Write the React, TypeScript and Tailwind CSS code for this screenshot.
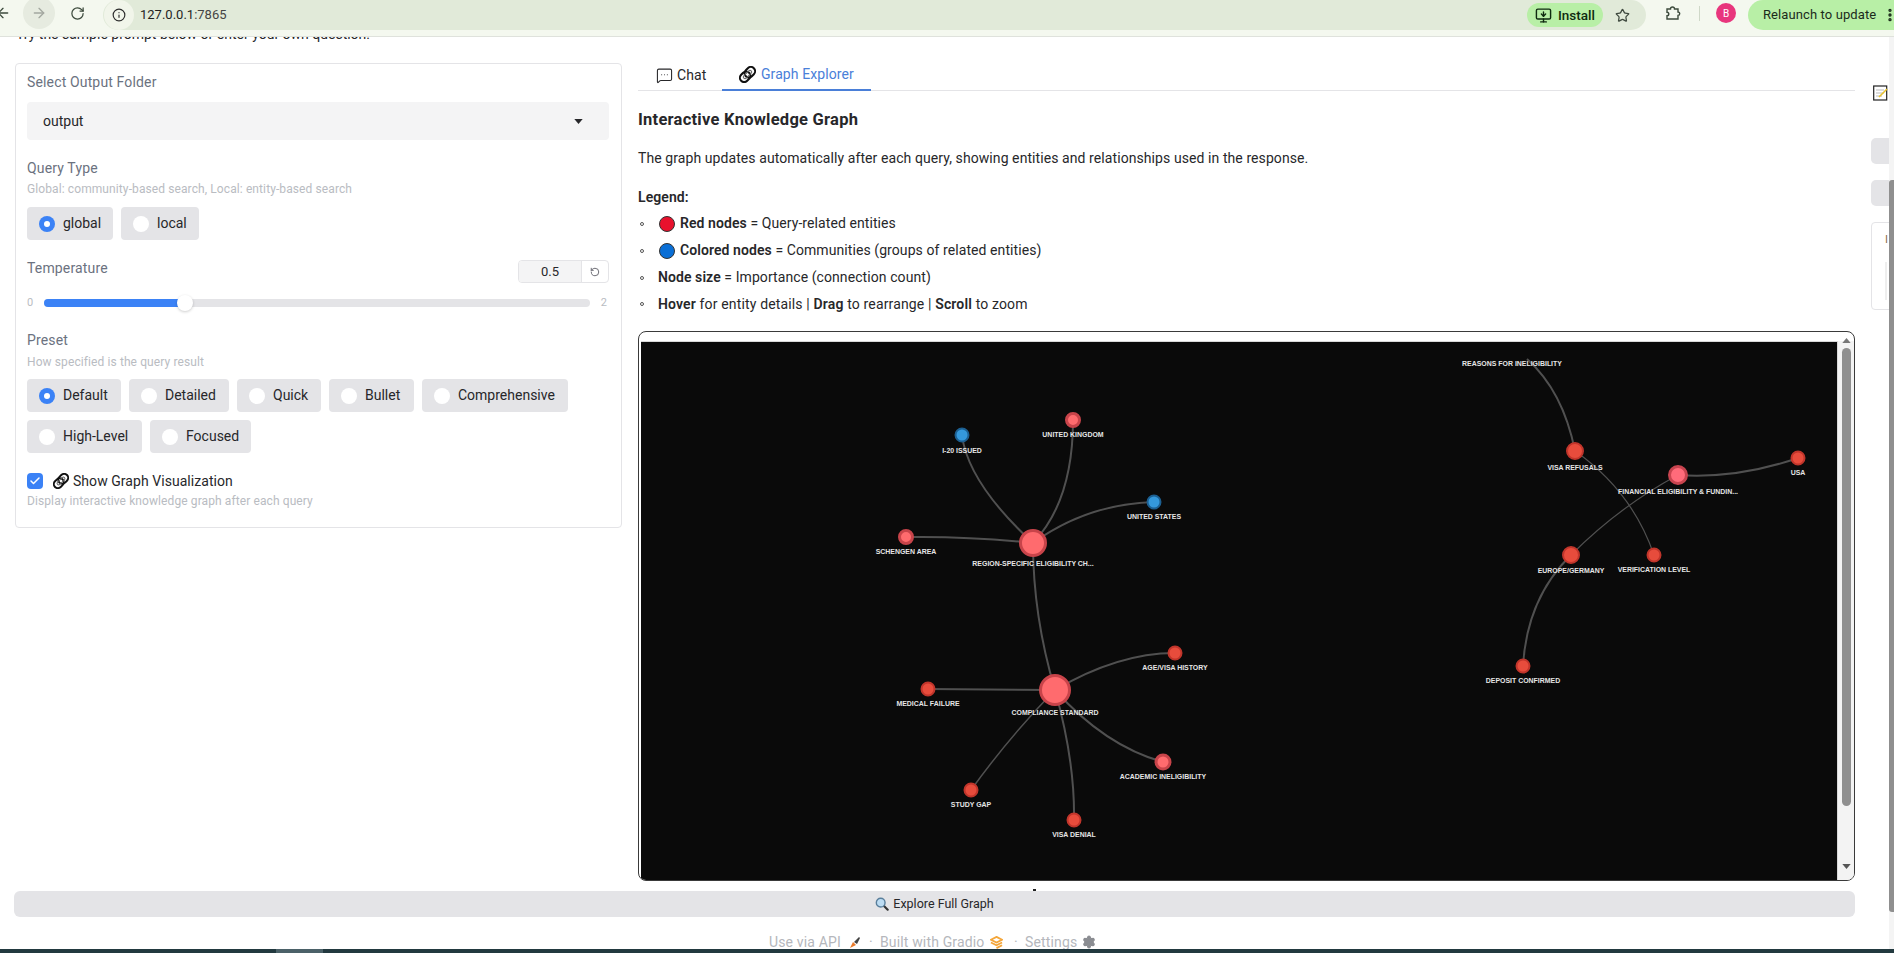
import React from "react";
import { ArrowLeft, ArrowRight, RotateCw, Info, Star, MonitorDown, MoreVertical, MessageSquareMore, RotateCcw, Check, Settings } from "lucide-react";

const LinkEmoji = ({ className }: { className: string }) => (
  <svg viewBox="0 0 18 18" className={className}>
    <g transform="rotate(-45 9 9)" fill="none" stroke="#111">
      <rect x="-0.5" y="4.5" width="12" height="9" rx="4.5" strokeWidth="2.2" />
      <rect x="6.5" y="4.5" width="12" height="9" rx="4.5" strokeWidth="2.2" />
      <rect x="3.5" y="7.2" width="11" height="3.6" rx="1.8" strokeWidth="1.1" stroke="#666" />
    </g>
  </svg>
);

const Radio = ({ label, w, on }: { label: string; w: string; on?: boolean }) => (
  <div className={`${w} h-[33px] flex items-center pl-[12px] gap-[8px] rounded-[4px] bg-[#e4e4e7] text-[14px] text-[#27272a]`}>
    {on ? (
      <span className="w-[16px] h-[16px] rounded-full bg-[#3b82f6] flex items-center justify-center shrink-0">
        <span className="w-[6px] h-[6px] rounded-full bg-white" />
      </span>
    ) : (
      <span className="w-[16px] h-[16px] rounded-full bg-white shrink-0" />
    )}
    <span>{label}</span>
  </div>
);

type N = { x: number; y: number; r: number; sw: number; fill: string; stroke: string; label: string; ly: number };
const RED = { fill: "#e74c3c", stroke: "#c0352b" };
const PINK = { fill: "#ff6b6e", stroke: "#c8444a" };
const BLUE = { fill: "#3498db", stroke: "#1c5f91" };
const nodes: N[] = [
  { x: 962, y: 434, r: 6.5, sw: 2, ...BLUE, label: "I-20 ISSUED", ly: 449 },
  { x: 1073, y: 419, r: 6.5, sw: 3, ...PINK, label: "UNITED KINGDOM", ly: 433 },
  { x: 1154, y: 501, r: 6.5, sw: 2, ...BLUE, label: "UNITED STATES", ly: 515 },
  { x: 906, y: 536, r: 6.5, sw: 3, ...PINK, label: "SCHENGEN AREA", ly: 550 },
  { x: 1033, y: 542, r: 12.5, sw: 3, ...PINK, label: "REGION-SPECIFIC ELIGIBILITY CH...", ly: 562 },
  { x: 1055, y: 689, r: 14.5, sw: 3, ...PINK, label: "COMPLIANCE STANDARD", ly: 711 },
  { x: 1175, y: 652, r: 6.5, sw: 2, ...RED, label: "AGE/VISA HISTORY", ly: 666 },
  { x: 928, y: 688, r: 6.5, sw: 2, ...RED, label: "MEDICAL FAILURE", ly: 702 },
  { x: 1163, y: 761, r: 7, sw: 3, ...PINK, label: "ACADEMIC INELIGIBILITY", ly: 775 },
  { x: 971, y: 789, r: 6.5, sw: 2, ...RED, label: "STUDY GAP", ly: 803 },
  { x: 1074, y: 819, r: 6.5, sw: 2, ...RED, label: "VISA DENIAL", ly: 833 },
  { x: 1575, y: 450, r: 8, sw: 2, ...RED, label: "VISA REFUSALS", ly: 466 },
  { x: 1678, y: 474, r: 8.5, sw: 3, fill: "#ff6b7a", stroke: "#c8444f", label: "FINANCIAL ELIGIBILITY & FUNDIN...", ly: 490.5 },
  { x: 1798, y: 457, r: 6.5, sw: 2, ...RED, label: "USA", ly: 471 },
  { x: 1571, y: 554, r: 8, sw: 2, ...RED, label: "EUROPE/GERMANY", ly: 569.5 },
  { x: 1654, y: 554, r: 6.5, sw: 2, ...RED, label: "VERIFICATION LEVEL", ly: 568 },
  { x: 1523, y: 665, r: 6.5, sw: 2, ...RED, label: "DEPOSIT CONFIRMED", ly: 679 },
];
const edges: [string, number][] = [
  ["M1033 542Q968 482 962 434", 2],
  ["M1033 542Q1073 500 1073 419", 2],
  ["M1033 542Q1087 503 1154 501", 2],
  ["M1033 542Q969 535 906 536", 2],
  ["M1033 542Q1033 615 1055 689", 2],
  ["M1055 689Q1118 652 1175 652", 2],
  ["M1055 689L928 688", 2],
  ["M1055 689Q1105 745 1163 761", 2],
  ["M1055 689Q1010 735 971 789", 1.5],
  ["M1055 689Q1075 760 1074 819", 2],
  ["M1527 358Q1563 390 1575 450", 2],
  ["M1575 450Q1632 490 1654 554", 1.2],
  ["M1678 474Q1737 478 1798 457", 2],
  ["M1678 474Q1620 505 1571 554", 1.2],
  ["M1571 554Q1527 597 1523 665", 2],
];

export default function App() {
  return (
    <div className="w-[1894px] h-[953px] overflow-hidden flex flex-col bg-white font-['Roboto','Noto_Sans',sans-serif] text-[#27272a]">
      <header className="h-[37px] shrink-0 flex items-start bg-[#f4f8ef] border-b border-[#dfe2dc]">
        <ArrowLeft className="w-[16px] h-[16px] mt-[5px] -ml-[5px] text-[#3c4a3c] shrink-0" />
        <div className="w-[32px] h-[32px] -mt-[3px] ml-[12px] rounded-full bg-[#e6ebe0] flex items-center justify-center shrink-0">
          <ArrowRight className="w-[16px] h-[16px] text-[#a3a8a0]" />
        </div>
        <RotateCw className="w-[15px] h-[15px] mt-[6px] ml-[15px] text-[#3c4a3c] shrink-0" />
        <div className="ml-[18px] w-[1543px] h-[30px] rounded-full bg-[#e1ead9] flex items-center shrink-0">
          <div className="w-[30px] h-[30px] rounded-full bg-[#f1f5ea] flex items-center justify-center ml-[1px]">
            <Info className="w-[14px] h-[14px] text-[#2c2c2c]" />
          </div>
          <span className="ml-[6px] text-[13px] text-[#1f1f1f]">127.0.0.1<span className="text-[#444]">:7865</span></span>
          <div className="ml-auto w-[76px] h-[24px] rounded-full bg-[#b8efa6] flex items-center pl-[8px] gap-[6px] text-[13.5px] font-medium text-[#0f2a10]">
            <MonitorDown className="w-[17px] h-[17px]" />
            <span>Install</span>
          </div>
          <Star className="w-[15px] h-[15px] ml-[12px] mr-[16px] text-[#3f4a3f]" />
        </div>
        <svg viewBox="0 0 16 16" className="w-[16px] h-[16px] mt-[5px] ml-[19px] shrink-0">
          <path d="M2 4h3.5a2 2 0 0 1 4 0H13v3a1.7 1.7 0 0 1 0 3.4V14H2v-3.2a1.8 1.8 0 0 0 0-3.6z" fill="none" stroke="#3c4a3c" strokeWidth="1.4" />
        </svg>
        <div className="w-px h-[15px] mt-[6px] ml-[18px] bg-[#cfd8c8] shrink-0" />
        <div className="w-[20px] h-[20px] mt-[3px] ml-[16px] rounded-full bg-[#e8367d] text-white text-[10px] flex items-center justify-center shrink-0">B</div>
        <div className="w-[146px] h-[30px] ml-[12px] rounded-l-full bg-[#b8efa6] flex items-center pl-[15px] text-[13px] tracking-[0.1px] text-[#1b2b1b] shrink-0 whitespace-nowrap">
          <span>Relaunch to update</span>
          <MoreVertical className="w-[16px] h-[16px] ml-[6px] shrink-0" strokeWidth={3} />
        </div>
      </header>

      <div className="flex-1 min-h-0 flex">
        <main className="w-[1889px] shrink-0 overflow-hidden">
          <div className="h-[7px] overflow-hidden pl-[16px]">
            <p className="-mt-[13px] text-[14px] leading-[20px]">Try the sample prompt below or enter your own question.</p>
          </div>

          <div className="mt-[19px] pl-[15px] flex gap-[16px] h-[818px]">
            <section className="w-[607px] h-[465px] shrink-0 rounded-[4px] border border-[#e4e4e7] pl-[11px] pr-[12px] pt-[8px]">
              <div className="text-[14px] leading-[20px] tracking-[0.15px] text-[#6b7280]">Select Output Folder</div>
              <div className="mt-[10px] h-[38px] rounded-[4px] bg-[#f4f4f5] flex items-center justify-between pl-[16px] pr-[26px] text-[14px]">
                <span>output</span>
                <svg viewBox="0 0 10 6" className="w-[9px] h-[5px]"><path d="M0 0h10L5 6z" fill="#27272a" /></svg>
              </div>
              <div className="mt-[18px] text-[14px] leading-[20px] tracking-[0.15px] text-[#6b7280]">Query Type</div>
              <div className="mt-[3px] text-[12px] leading-[16px] tracking-[0.1px] text-[#b9bcc2]">Global: community-based search, Local: entity-based search</div>
              <div className="mt-[10px] flex gap-[8px]">
                <Radio label="global" w="w-[86px]" on />
                <Radio label="local" w="w-[78px]" />
              </div>
              <div className="mt-[20px] h-[23px] flex items-start justify-between">
                <span className="text-[14px] leading-[16px] tracking-[0.15px] text-[#6b7280]">Temperature</span>
                <div className="w-[91px] h-[23px] rounded-[4px] border border-[#e4e4e7] flex overflow-hidden">
                  <div className="w-[62px] bg-[#f4f4f5] flex items-center justify-center text-[13px]">0.5</div>
                  <div className="flex-1 border-l border-[#e4e4e7] flex items-center justify-center">
                    <RotateCcw className="w-[10px] h-[10px] text-[#52525b]" />
                  </div>
                </div>
              </div>
              <div className="mt-[12px] h-[16px] flex items-center text-[11px] text-[#b9bcc2]">
                <span className="w-[17px]">0</span>
                <div className="relative w-[546px] h-[8px] rounded-full bg-[#e4e4e7]">
                  <div className="w-[141px] h-[8px] rounded-l-full bg-[#3b82f6]" />
                  <div className="absolute left-[133px] -top-[4px] w-[16px] h-[16px] rounded-full bg-white shadow-[0_1px_3px_rgba(0,0,0,0.2)]" />
                </div>
                <span className="w-[19px] text-right pr-[2px]">2</span>
              </div>
              <div className="mt-[19px] text-[14px] leading-[20px] tracking-[0.15px] text-[#6b7280]">Preset</div>
              <div className="mt-[4px] text-[12px] leading-[16px] tracking-[0.1px] text-[#b9bcc2]">How specified is the query result</div>
              <div className="mt-[9px] flex flex-wrap gap-[8px]">
                <Radio label="Default" w="w-[94px]" on />
                <Radio label="Detailed" w="w-[100px]" />
                <Radio label="Quick" w="w-[84px]" />
                <Radio label="Bullet" w="w-[85px]" />
                <Radio label="Comprehensive" w="w-[146px]" />
                <Radio label="High-Level" w="w-[115px]" />
                <Radio label="Focused" w="w-[101px]" />
              </div>
              <div className="mt-[18px] h-[20px] flex items-center">
                <span className="w-[16px] h-[16px] rounded-[4px] bg-[#3b82f6] flex items-center justify-center shrink-0">
                  <Check className="w-[12px] h-[12px] text-white" strokeWidth={3} />
                </span>
                <LinkEmoji className="w-[16px] h-[16px] ml-[10px] shrink-0" />
                <span className="ml-[4px] text-[14px] tracking-[0.05px]">Show Graph Visualization</span>
              </div>
              <div className="mt-[2px] text-[12px] leading-[16px] tracking-[0.1px] text-[#b9bcc2]">Display interactive knowledge graph after each query</div>
            </section>

            <section className="w-[1217px] shrink-0 flex flex-col tracking-[0.08px]">
              <div className="h-[28px] border-b border-[#e4e4e7] flex text-[14px]">
                <div className="w-[84px] h-[25px] pl-[18px] flex items-center gap-[4px]">
                  <MessageSquareMore className="w-[17px] h-[17px]" strokeWidth={1.5} />
                  <span>Chat</span>
                </div>
                <div className="w-[149px] h-[28px] pl-[17px] pb-[3px] flex items-center gap-[5px] border-b-2 border-[#4a7fd8] text-[#4a80d9]">
                  <LinkEmoji className="w-[17px] h-[17px]" />
                  <span>Graph Explorer</span>
                </div>
              </div>
              <h2 className="mt-[19px] text-[16.5px] tracking-[0.25px] leading-[20px] font-bold">Interactive Knowledge Graph</h2>
              <p className="mt-[18px] text-[14px] leading-[20px]">The graph updates automatically after each query, showing entities and relationships used in the response.</p>
              <div className="mt-[19px] text-[14px] leading-[20px] font-semibold">Legend:</div>
              <ul className="mt-[3px] text-[14px]">
                <li className="h-[27px] flex items-center">
                  <span className="w-[4px] h-[4px] ml-[2px] rounded-full border border-[#555] shrink-0" />
                  <span className="ml-[15px] w-[16px] h-[16px] rounded-full bg-[#e8112d] border border-[#333] shrink-0" />
                  <span className="ml-[5px]"><b className="font-semibold">Red nodes</b> = Query-related entities</span>
                </li>
                <li className="h-[27px] flex items-center">
                  <span className="w-[4px] h-[4px] ml-[2px] rounded-full border border-[#555] shrink-0" />
                  <span className="ml-[15px] w-[16px] h-[16px] rounded-full bg-[#0a6fd6] border border-[#333] shrink-0" />
                  <span className="ml-[5px]"><b className="font-semibold">Colored nodes</b> = Communities (groups of related entities)</span>
                </li>
                <li className="h-[27px] flex items-center">
                  <span className="w-[4px] h-[4px] ml-[2px] rounded-full border border-[#555] shrink-0" />
                  <span className="ml-[14px]"><b className="font-semibold">Node size</b> = Importance (connection count)</span>
                </li>
                <li className="h-[26px] flex items-center tracking-[0.15px]">
                  <span className="w-[4px] h-[4px] ml-[2px] rounded-full border border-[#555] shrink-0" />
                  <span className="ml-[14px]"><b className="font-semibold">Hover</b> for entity details | <b className="font-semibold">Drag</b> to rearrange | <b className="font-semibold">Scroll</b> to zoom</span>
                </li>
              </ul>
              <div className="mt-[14px] h-[550px] rounded-[8px] border border-[#3a3a3a] overflow-hidden pt-[9px] pl-[2px] flex">
                <div className="w-[1197px] h-[540px] border-t border-r border-[#d8d8d8] bg-[#0a0a0a] shrink-0">
                  <svg viewBox="641 341 1196 540" className="w-[1196px] h-[540px] block tracking-normal">
                    {edges.map(([d, w], i) => (
                      <path key={i} d={d} fill="none" stroke="#505050" strokeWidth={w} />
                    ))}
                    {nodes.map((n) => (
                      <circle key={n.label} cx={n.x} cy={n.y} r={n.r} fill={n.fill} stroke={n.stroke} strokeWidth={n.sw} />
                    ))}
                    {nodes.map((n) => (
                      <text key={n.label} x={n.x} y={n.ly + 2.6} textAnchor="middle" fill="#e6e6e6" fontSize="6.95" fontWeight="700" className="font-['Liberation_Sans',sans-serif]">
                        {n.label}
                      </text>
                    ))}
                    <text x="1512" y="364.6" textAnchor="middle" fill="#e6e6e6" fontSize="6.95" fontWeight="700" className="font-['Liberation_Sans',sans-serif]">REASONS FOR INELIGIBILITY</text>
                  </svg>
                </div>
                <div className="flex-1 flex flex-col items-center bg-[#f3f3f3] h-[540px]">
                  <svg viewBox="0 0 10 6" className="w-[9px] h-[5px] mt-[-3px] shrink-0"><path d="M5 0l5 6H0z" fill="#777" /></svg>
                  <div className="mt-[5px] w-[9px] h-[458px] rounded-full bg-[#8f8f8f] shrink-0" />
                  <svg viewBox="0 0 10 6" className="w-[9px] h-[5px] mt-[58px] shrink-0"><path d="M0 0h10L5 6z" fill="#555" /></svg>
                </div>
              </div>
            </section>

            <aside className="w-[30px] shrink-0 flex flex-col">
              <svg viewBox="0 0 16 16" className="w-[16px] h-[16px] ml-[2px] mt-[22px] shrink-0">
                <rect x="0.7" y="1" width="13" height="14" fill="#fff" stroke="#222" strokeWidth="1.2" />
                <path d="M3 5h8M3 8h8M3 11h6" stroke="#bbb" />
                <path d="M6 12l8-8" stroke="#e8c230" strokeWidth="1.6" />
              </svg>
              <div className="mt-[37px] h-[26px] rounded-[5px] bg-[#e4e4e7]" />
              <div className="mt-[16px] h-[26px] rounded-[5px] bg-[#e4e4e7]" />
              <div className="mt-[16px] h-[88px] rounded-[4px] border border-[#e4e4e7] pl-[13px] pt-[11px] text-[11px] leading-[12px] text-[#8a6d4b]">
                I
                <div className="mt-[16px] w-[2px] h-[38px] bg-[#eeeeee]" />
              </div>
            </aside>
          </div>

          <div className="relative mt-[10px] ml-[14px] w-[1841px] h-[26px] rounded-[6px] bg-[#e4e4e7] flex items-center justify-center gap-[4px] text-[12.5px]">
            <span className="absolute left-[1019px] -top-[2px] w-[3px] h-[2px] bg-[#222]" />
            <svg viewBox="0 0 16 16" className="w-[14px] h-[14px]">
              <path d="M10 10l4.5 4.5" stroke="#333" strokeWidth="2.4" strokeLinecap="round" />
              <circle cx="6.5" cy="6.5" r="5" fill="#bcdcf3" stroke="#5a7f9c" strokeWidth="1.6" />
            </svg>
            <span>Explore Full Graph</span>
          </div>

          <footer className="mt-[15px] ml-[769px] h-[20px] flex items-center text-[14px] tracking-[0.15px] text-[#b5b7bc] whitespace-nowrap">
            <span className="w-[71px]">Use via API</span>
            <svg viewBox="0 0 12 14" className="w-[12px] h-[14px] ml-[9px]">
              <path d="M1 13l3-6 3 3z" fill="#ea7a2a" />
              <path d="M5 7l5-5 1 1-3 6z" fill="#444" />
            </svg>
            <span className="ml-[8px] w-[4px]">·</span>
            <span className="ml-[7px] w-[105px]">Built with Gradio</span>
            <svg viewBox="0 0 14 14" className="w-[13px] h-[13px] ml-[5px]">
              <path d="M7 1l6 3-6 3-6-3zM1 7l6 3 6-3M7 13l6-3" fill="none" stroke="#f4a63a" strokeWidth="2" />
            </svg>
            <span className="ml-[11px] w-[4px]">·</span>
            <span className="ml-[7px] w-[51px]">Settings</span>
            <Settings className="w-[14px] h-[14px] ml-[6px] text-[#8b8d92]" fill="#8b8d92" />
          </footer>
        </main>

        <div className="relative w-[5px] bg-[#f4f4f4] flex flex-col items-center">
          <div className="mt-[143px] w-[5px] h-[732px] bg-[#8f8f8f] rounded-l-[3px]" />
        </div>
      </div>

      <div className="h-[4px] shrink-0 bg-[#22393f] pl-[276px]">
        <div className="w-[47px] h-[4px] bg-[#4b6168]" />
      </div>
    </div>
  );
}
